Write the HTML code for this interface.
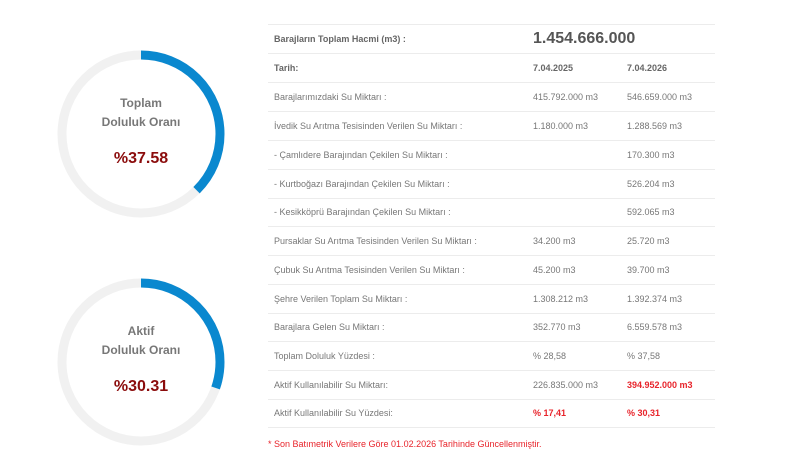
<!DOCTYPE html>
<html><head><meta charset="utf-8"><style>
body{margin:0;width:800px;height:454px;background:#fff;font-family:"Liberation Sans",sans-serif;position:relative;overflow:hidden}
.t{position:absolute;white-space:nowrap;font-size:9px;color:#777}
.line{position:absolute;left:268px;width:447px;height:1px;background:#ececec}
.b{font-weight:bold;color:#666}
.r{color:#e8242b;font-weight:bold}
.ct{position:absolute;width:160px;text-align:center;font-weight:bold;color:#777;font-size:12px}
.cv{position:absolute;width:160px;text-align:center;font-weight:bold;color:#8b0c0c;font-size:16px}
</style></head><body>
<svg width="800" height="454" style="position:absolute;left:0;top:0">
<circle cx="141" cy="134" r="79" fill="none" stroke="#f1f1f1" stroke-width="9"/>
<circle cx="141" cy="134" r="79" fill="none" stroke="#0a88cf" stroke-width="9" stroke-dasharray="186.5 500" transform="rotate(-90 141 134)"/>
<circle cx="141" cy="362" r="79" fill="none" stroke="#f1f1f1" stroke-width="9"/>
<circle cx="141" cy="362" r="79" fill="none" stroke="#0a88cf" stroke-width="9" stroke-dasharray="150.5 500" transform="rotate(-90 141 362)"/>
</svg>
<div class="ct" style="left:61px;top:96px">Toplam</div>
<div class="ct" style="left:61px;top:115px">Doluluk Oranı</div>
<div class="cv" style="left:61px;top:150px">%37.58</div>
<div class="ct" style="left:61px;top:324px">Aktif</div>
<div class="ct" style="left:61px;top:343px">Doluluk Oranı</div>
<div class="cv" style="left:61px;top:378px">%30.31</div>

<div class="line" style="top:24px"></div>
<div class="line" style="top:53px"></div>
<div class="line" style="top:82px"></div>
<div class="line" style="top:111px"></div>
<div class="line" style="top:140px"></div>
<div class="line" style="top:169px"></div>
<div class="line" style="top:198px"></div>
<div class="line" style="top:226px"></div>
<div class="line" style="top:255px"></div>
<div class="line" style="top:284px"></div>
<div class="line" style="top:313px"></div>
<div class="line" style="top:341px"></div>
<div class="line" style="top:370px"></div>
<div class="line" style="top:399px"></div>
<div class="line" style="top:427px"></div>

<div class="t b" style="left:274px;top:34px">Barajların Toplam Hacmi (m3) :</div>
<div class="t" style="left:533px;top:30px;font-size:16px;font-weight:bold;color:#555">1.454.666.000</div>
<div class="t b" style="left:274px;top:63px">Tarih:</div>
<div class="t b" style="left:533px;top:63px">7.04.2025</div>
<div class="t b" style="left:627px;top:63px">7.04.2026</div>

<div class="t" style="left:274px;top:92px">Barajlarımızdaki Su Miktarı :</div>
<div class="t" style="left:533px;top:92px">415.792.000 m3</div>
<div class="t" style="left:627px;top:92px">546.659.000 m3</div>

<div class="t" style="left:274px;top:121px">İvedik Su Arıtma Tesisinden Verilen Su Miktarı :</div>
<div class="t" style="left:533px;top:121px">1.180.000 m3</div>
<div class="t" style="left:627px;top:121px">1.288.569 m3</div>

<div class="t" style="left:274px;top:150px">- Çamlıdere Barajından Çekilen Su Miktarı :</div>
<div class="t" style="left:627px;top:150px">170.300 m3</div>

<div class="t" style="left:274px;top:179px">- Kurtboğazı Barajından Çekilen Su Miktarı :</div>
<div class="t" style="left:627px;top:179px">526.204 m3</div>

<div class="t" style="left:274px;top:207px">- Kesikköprü Barajından Çekilen Su Miktarı :</div>
<div class="t" style="left:627px;top:207px">592.065 m3</div>

<div class="t" style="left:274px;top:236px">Pursaklar Su Arıtma Tesisinden Verilen Su Miktarı :</div>
<div class="t" style="left:533px;top:236px">34.200 m3</div>
<div class="t" style="left:627px;top:236px">25.720 m3</div>

<div class="t" style="left:274px;top:265px">Çubuk Su Arıtma Tesisinden Verilen Su Miktarı :</div>
<div class="t" style="left:533px;top:265px">45.200 m3</div>
<div class="t" style="left:627px;top:265px">39.700 m3</div>

<div class="t" style="left:274px;top:294px">Şehre Verilen Toplam Su Miktarı :</div>
<div class="t" style="left:533px;top:294px">1.308.212 m3</div>
<div class="t" style="left:627px;top:294px">1.392.374 m3</div>

<div class="t" style="left:274px;top:322px">Barajlara Gelen Su Miktarı :</div>
<div class="t" style="left:533px;top:322px">352.770 m3</div>
<div class="t" style="left:627px;top:322px">6.559.578 m3</div>

<div class="t" style="left:274px;top:351px">Toplam Doluluk Yüzdesi :</div>
<div class="t" style="left:533px;top:351px">% 28,58</div>
<div class="t" style="left:627px;top:351px">% 37,58</div>

<div class="t" style="left:274px;top:380px">Aktif Kullanılabilir Su Miktarı:</div>
<div class="t" style="left:533px;top:380px">226.835.000 m3</div>
<div class="t r" style="left:627px;top:380px">394.952.000 m3</div>

<div class="t" style="left:274px;top:408px">Aktif Kullanılabilir Su Yüzdesi:</div>
<div class="t r" style="left:533px;top:408px">% 17,41</div>
<div class="t r" style="left:627px;top:408px">% 30,31</div>

<div class="t" style="left:268px;top:439px;color:#e8242b">* Son Batımetrik Verilere Göre 01.02.2026 Tarihinde Güncellenmiştir.</div>
</body></html>
